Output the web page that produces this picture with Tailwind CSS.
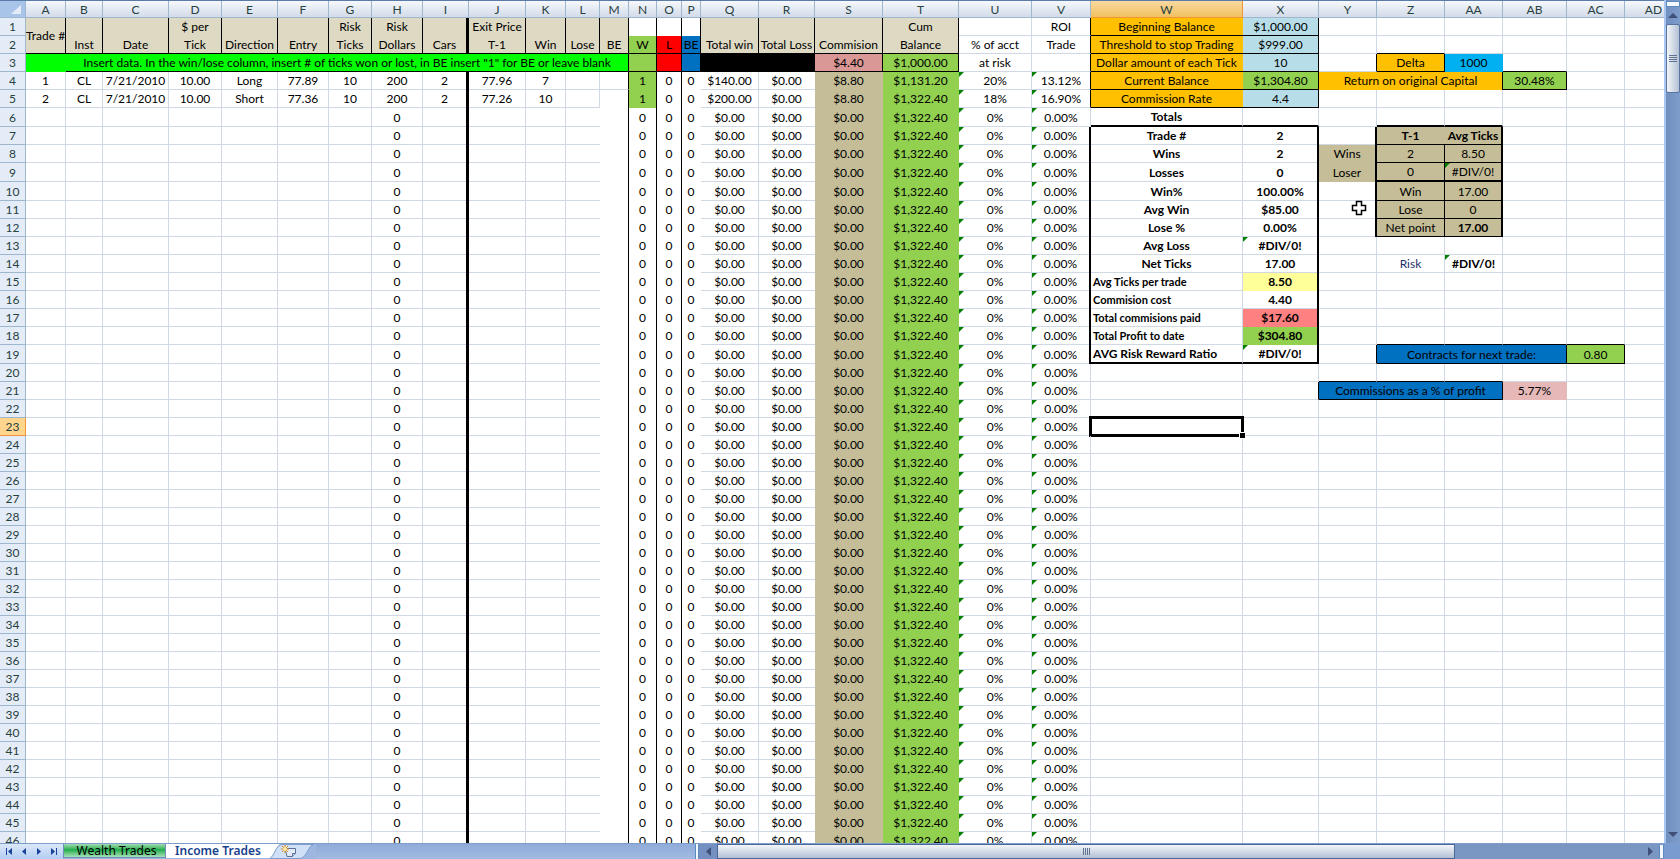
<!DOCTYPE html>
<html lang="en">

<head>
    <meta charset="UTF-8">
    <meta name="viewport" content="width=device-width, initial-scale=1.0">
    <title>Income Trades</title>
    <script src="https://cdn.jsdelivr.net/npm/@tailwindcss/browser@4"></script>
</head>

<body class="h-screen flex flex-col overflow-hidden bg-white text-black font-[Lato,Carlito,sans-serif] text-[12px] leading-[16px]">
    <div class="flex flex-1 min-h-0">
        <main class="flex-1 min-w-0 overflow-hidden border-t border-[#5b7ba8]">
            <table id="sheet" class="table-fixed border-separate border-spacing-0 w-[1683px]">
                <colgroup id="cols"></colgroup>
                <thead id="head"></thead>
                <tbody id="body"></tbody>
            </table>
        </main>
        <!-- vertical scrollbar -->
        <aside class="w-4 shrink-0 flex flex-col items-center border-l-2 border-[#a9c7f0] bg-linear-to-r from-[#6f8fbf] to-[#7f9dcb]">
            <div class="w-full h-[6px] bg-[#f3f8fd] border border-[#5b8ac0] mt-px"></div>
            <button aria-label="Scroll up" class="h-[17px] flex items-center"><svg width="10" height="5" viewBox="0 0 10 5"><path d="M0 5L5 0L10 5Z" fill="#3f4f77" /></svg></button>
            <div class="w-full h-[69px] rounded-xs border border-[#5a74a0] bg-linear-to-r from-[#f4f6f9] to-[#b3c0d4] flex flex-col items-center justify-center gap-px">
                <i class="w-2 h-px bg-[#5f7391]"></i><i class="w-2 h-px bg-[#5f7391]"></i><i class="w-2 h-px bg-[#5f7391]"></i><i class="w-2 h-px bg-[#5f7391]"></i>
            </div>
            <button aria-label="Scroll down" class="mt-auto mb-[6px]"><svg width="10" height="5" viewBox="0 0 10 5"><path d="M0 0H10L5 5Z" fill="#3f4f77" /></svg></button>
        </aside>
    </div>

    <!-- sheet tabs and horizontal scrollbar -->
    <footer class="h-4 shrink-0 flex bg-[#9db7e0] border-t border-[#7d9dcb]">
        <div class="w-[63px] px-[6px] flex items-center justify-between bg-linear-to-b from-[#dbe8f9] to-[#b3cdf2] text-[#17419a]">
            <button aria-label="First sheet"><svg width="7" height="7" viewBox="0 0 7 7" fill="currentColor"><path d="M0 0H1V7H0ZM6 0V7L2 3.500Z" /></svg></button>
            <button aria-label="Previous sheet"><svg width="7" height="7" viewBox="0 0 7 7" fill="currentColor"><path d="M5 0V7L1 3.500Z" /></svg></button>
            <button aria-label="Next sheet"><svg width="7" height="7" viewBox="0 0 7 7" fill="currentColor"><path d="M2 0V7L6 3.500Z" /></svg></button>
            <button aria-label="Last sheet"><svg width="7" height="7" viewBox="0 0 7 7" fill="currentColor"><path d="M6 0H7V7H6ZM1 0V7L5 3.500Z" /></svg></button>
        </div>
        <button class="w-[103px] h-[14px] pl-1 border-x border-b border-[#6d8fb8] bg-linear-to-b from-[#9fdcb4] via-[#12ad4c] via-45% to-[#a3e2b8] font-['Noto_Sans'] text-[12px] leading-[14px] whitespace-nowrap">Wealth Trades</button>
        <button class="w-[104px] h-[14px] bg-white font-['Noto_Sans'] font-semibold text-[12px] leading-[14px] text-[#15428b] whitespace-nowrap">Income Trades</button>
        <button aria-label="Insert worksheet" class="w-[46px]">
            <svg width="46" height="15" viewBox="0 0 46 15">
                <path d="M0 0H10Q7 2 5 8L0 15Z" fill="#fff" />
                <path d="M-1 14.500C5 13 5 1 12 .5H44C38 1 37 14 30 14.500Z" fill="#cfe0f7" stroke="#7d9dcb" />
                <path d="M15 4.500H25.500V9.500L22.500 12.500H17Z" fill="#e3ebf8" stroke="#5d7099" />
                <path d="M25.500 9.500H22.500V12.500" fill="#c5d3ea" stroke="#5d7099" />
                <path d="M15 1V9M11 5H19M12 2L18 8M18 2L12 8" stroke="#d9861c" />
                <circle cx="15" cy="5" r="2" fill="#ffe9a0" />
            </svg>
        </button>
        <div class="w-[379px] bg-linear-to-b from-[#8fabd8] to-[#a2bbe2]"></div>
        <div class="w-1 bg-[#f3f8fd] border-x border-[#5b8ac0]"></div>
        <div class="flex-1 flex items-center bg-[#7a97c3]">
            <button aria-label="Scroll left" class="w-[18px] h-full flex items-center justify-center bg-[#7390c0]"><svg width="5" height="9" viewBox="0 0 5 9"><path d="M5 0V9L0 4.500Z" fill="#3f4f77" /></svg></button>
            <div class="w-[76.5%] h-full border border-[#4a679b] bg-linear-to-b from-[#f4f6f9] to-[#b3c0d4] flex items-center justify-center gap-px">
                <i class="w-px h-[7px] bg-[#5f7391]"></i><i class="w-px h-[7px] bg-[#5f7391]"></i><i class="w-px h-[7px] bg-[#5f7391]"></i><i class="w-px h-[7px] bg-[#5f7391]"></i>
            </div>
            <button aria-label="Scroll right" class="ml-auto mr-[6px]"><svg width="5" height="9" viewBox="0 0 5 9"><path d="M0 0V9L5 4.500Z" fill="#3f4f77" /></svg></button>
            <div class="w-[5px] h-[13px] bg-[#f3f8fd] border-x border-[#5b8ac0]"></div>
        </div>
        <div class="w-4 bg-[#7a9bd0]"></div>
    </footer>

    <script>
        const cols = [
            ['A', 40], ['B', 37], ['C', 66], ['D', 53], ['E', 56], ['F', 51], ['G', 43], ['H', 51], ['I', 46], ['J', 57],
            ['K', 40], ['L', 34], ['M', 29], ['N', 28], ['O', 25], ['P', 19], ['Q', 58], ['R', 56], ['S', 68], ['T', 76],
            ['U', 73], ['V', 59], ['W', 152], ['X', 76], ['Y', 58], ['Z', 68], ['AA', 58], ['AB', 64], ['AC', 58], ['AD', 58]
        ];
        const names = cols.map(c => c[0]);
        const tallRows = [6, 9, 10, 19];
        const ROWS = 46;

        // fills
        const tan = 'bg-[#ddd9c3]', khaki = 'bg-[#c4bd97]', green = 'bg-[#92d050]', lime = 'bg-[#00ff00]';
        const gold = 'bg-[#ffc000]', sky = 'bg-[#b7dee8]', blue = 'bg-[#0070c0]', red = 'bg-[#ff0000]';
        // edges; cells with no bottom border get padding so text keeps one baseline
        const grid = 'border-r border-r-[#d0d7e5]', gridB = 'border-b border-b-[#d0d7e5] pb-0';
        const black = 'border-r border-r-black', under = 'border-b border-b-black pb-0';
        const none = 'border-r-0 pr-px', noneB = 'border-b-0 pb-px';
        const b2 = 'border-b-2 border-b-black pb-0';
        const r2 = 'relative pr-[2px] after:absolute after:top-0 after:-bottom-px after:right-0 after:w-[2px] after:bg-black';
        const r3 = 'relative pr-[3px] after:absolute after:top-0 after:-bottom-px after:right-0 after:w-[3px] after:bg-black';

        const cells = {};
        const cell = (ref) => cells[ref] || (cells[ref] = { text: '', bg: '', cls: '', right: grid, bottom: gridB });
        function range(from, to, r1, r2, fn) {
            for (let c = names.indexOf(from); c <= names.indexOf(to); c++)
                for (let r = r1; r <= r2; r++) fn(cell(names[c] + r));
        }
        const fill = (from, to, r1, r2, bg) => range(from, to, r1, r2, x => {
            x.bg = bg;
            x.right = none;
            x.bottom = noneB;
        });
        const right = (from, to, r1, r2, cls) => range(from, to, r1, r2, x => x.right = cls);
        const bottom = (from, to, r1, r2, cls) => range(from, to, r1, r2, x => x.bottom = cls);
        const text = (ref, t, cls) => { const x = cell(ref); x.text = t; if (cls) x.cls = cls; };

        range('A', 'AD', 1, ROWS, () => { });

        // trade log header
        fill('A', 'M', 1, 2, tan);
        fill('Q', 'T', 1, 2, tan);
        right('A', 'T', 1, 2, black);
        fill('M', 'P', 4, ROWS, 'bg-white');
        bottom('M', 'M', 4, 4, gridB);
        bottom('N', 'P', 1, 1, noneB);
        right('L', 'L', 6, ROWS, none);
        fill('N', 'N', 2, 5, green);
        fill('O', 'O', 2, 3, red);
        fill('P', 'P', 2, 3, blue);
        right('M', 'O', 1, ROWS, black);
        right('P', 'P', 1, 3, black);
        fill('A', 'B', 3, 3, lime);
        fill('Q', 'R', 3, 3, 'bg-black');
        fill('S', 'S', 3, 3, 'bg-[#d99795]');
        right('R', 'S', 3, 3, black);
        fill('S', 'S', 4, ROWS, khaki);
        right('R', 'R', 4, ROWS, none);
        fill('T', 'T', 3, ROWS, green);
        right('T', 'T', 3, 3, black);
        right('I', 'I', 1, ROWS, r3);
        bottom('A', 'T', 2, 2, under);
        bottom('B', 'T', 3, 3, under);

        cell('A1').rowspan = 2;
        text('A1', 'Trade #');
        cell('A1').bottom = under;
        ['B Inst', 'C Date', 'D Tick', 'E Direction', 'F Entry', 'G Ticks', 'H Dollars', 'I Cars', 'J T-1', 'K Win', 'L Lose', 'M BE',
            'N W', 'O L', 'P BE', 'Q Total win', 'R Total Loss', 'S Commision', 'T Balance', 'U % of acct', 'V Trade'
        ].forEach(s => text(s.split(' ')[0] + 2, s.slice(2)));
        text('D1', '$ per'); text('G1', 'Risk'); text('H1', 'Risk'); text('J1', 'Exit Price'); text('T1', 'Cum'); text('V1', 'ROI');
        text('B3', 'Insert data. In the win/lose column, insert # of ticks won or lost, in BE insert "1" for BE or leave blank');
        cell('B3').colspan = 12;
        cell('B3').right = black;
        text('S3', '$4.40'); text('T3', '$1,000.00'); text('U3', 'at risk');

        const trades = {
            4: ['1', 'CL', '7/21/2010', '10.00', 'Long', '77.89', '10', '200', '2', '77.96', '7', '', '', '1', '0', '0', '$140.00', '$0.00', '$8.80', '$1,131.20', '20%', '13.12%'],
            5: ['2', 'CL', '7/21/2010', '10.00', 'Short', '77.36', '10', '200', '2', '77.26', '10', '', '', '1', '0', '0', '$200.00', '$0.00', '$8.80', '$1,322.40', '18%', '16.90%']
        };
        const blank = ['', '', '', '', '', '', '', '0', '', '', '', '', '', '0', '0', '0', '$0.00', '$0.00', '$0.00', '$1,322.40', '0%', '0.00%'];
        for (let r = 4; r <= ROWS; r++) {
            (trades[r] || blank).forEach((t, i) => text(names[i] + r, t));
            cell('U' + r).flag = cell('V' + r).flag = true;
        }

        // account settings
        fill('W', 'W', 1, 5, gold);
        fill('X', 'X', 1, 5, sky);
        cell('X4').bg = green;
        bottom('W', 'X', 1, 5, under);
        right('V', 'V', 1, 5, black);
        right('X', 'X', 1, 5, black);
        [['Beginning Balance', '$1,000.00'], ['Threshold to stop Trading', '$999.00'], ['Dollar amount of each Tick', '10'],
        ['Current Balance', '$1,304.80'], ['Commission Rate', '4.4']].forEach(([k, v], i) => { text('W' + (i + 1), k); text('X' + (i + 1), v); });

        // totals
        fill('X', 'X', 15, 15, 'bg-[#ffff99]');
        fill('X', 'X', 17, 17, 'bg-[#ff8080]');
        fill('X', 'X', 18, 18, green);
        right('V', 'V', 7, 19, r2);
        right('X', 'X', 7, 19, r2);
        bottom('W', 'X', 6, 6, b2);
        bottom('W', 'X', 19, 19, b2);
        text('W6', 'Totals', 'font-bold');
        [['Trade #', '2'], ['Wins', '2'], ['Losses', '0'], ['Win%', '100.00%'], ['Avg Win', '$85.00'], ['Lose %', '0.00%'], ['Avg Loss', '#DIV/0!'],
        ['Net Ticks', '17.00'], ['Avg Ticks per trade', '8.50'], ['Commision cost', '4.40'], ['Total commisions paid', '$17.60'],
        ['Total Profit to date', '$304.80'], ['AVG Risk Reward Ratio', '#DIV/0!']].forEach(([k, v], i) => {
            const r = i + 7;
            text('W' + r, k, r < 15 ? 'font-bold' : r < 19 ? 'font-bold text-left pl-[2px] text-[11px]' : 'font-bold text-left pl-[2px]');
            text('X' + r, v, 'font-bold');
        });
        cell('X13').flag = cell('X19').flag = true;
        cell('W23').selected = true;

        // side boxes
        fill('Z', 'Z', 3, 3, gold);
        fill('AA', 'AA', 3, 3, 'bg-[#00b0f0]');
        fill('Y', 'Y', 4, 4, gold);
        fill('AB', 'AB', 4, 4, green);
        cell('Y3').right = cell('Z3').right = cell('Y4').right = cell('AB4').right = black;
        cell('Z2').bottom = cell('Z3').bottom = cell('AB3').bottom = cell('AB4').bottom = under;
        cell('Y4').colspan = 3;
        text('Z3', 'Delta'); text('AA3', '1000'); text('Y4', 'Return on original Capital'); text('AB4', '30.48%');

        fill('Y', 'Y', 8, 9, khaki);
        fill('Z', 'AA', 7, 12, khaki);
        right('Y', 'Y', 7, 12, r2);
        right('AA', 'AA', 7, 12, r2);
        right('Z', 'Z', 8, 12, black);
        bottom('Z', 'AA', 6, 6, b2);
        bottom('Z', 'AA', 7, 12, under);
        bottom('Z', 'AA', 9, 9, b2);
        text('Y8', 'Wins'); text('Y9', 'Loser');
        text('Z7', 'T-1', 'font-bold'); text('AA7', 'Avg Ticks', 'font-bold');
        text('Z8', '2'); text('AA8', '8.50'); text('Z9', '0'); text('AA9', '#DIV/0!');
        text('Z10', 'Win'); text('AA10', '17.00'); text('Z11', 'Lose'); text('AA11', '0');
        text('Z12', 'Net point'); text('AA12', '17.00', 'font-bold');
        text('Z14', 'Risk', 'text-[#1f2f6b]'); text('AA14', '#DIV/0!', 'font-bold');
        cell('AA9').flag = cell('AA14').flag = true;

        fill('Z', 'Z', 19, 19, blue);
        fill('AC', 'AC', 19, 19, green);
        bottom('Z', 'AC', 18, 19, under);
        cell('Y19').right = cell('Z19').right = cell('AC19').right = black;
        cell('Z19').colspan = 3;
        text('Z19', 'Contracts for next trade:'); text('AC19', '0.80');
        fill('Y', 'Y', 21, 21, blue);
        fill('AB', 'AB', 21, 21, 'bg-[#e6b8b7]');
        bottom('Y', 'AA', 20, 21, under);
        cell('X21').right = cell('Y21').right = black;
        cell('Y21').colspan = 3;
        text('Y21', 'Commissions as a % of profit'); text('AB21', '5.77%');

        // render
        document.getElementById('cols').innerHTML = '<col style="width:26px">' + cols.map(c => `<col style="width:${c[1]}px">`).join('');
        document.getElementById('head').innerHTML = '<tr class="h-[17px]">' +
            '<th class="p-0 bg-[#a9c4e9] border-r border-b border-[#9eb6ce]"><svg class="ml-auto mr-1" width="10" height="10" viewBox="0 0 10 10"><path d="M10 1V10H0Z" fill="#e4ecf7" /></svg></th>' +
            names.map(n => `<th scope="col" class="px-0 pt-px pb-0 h-[17px] leading-[14px] font-normal text-[#27413e] border-r border-b ${n === 'W' ? 'bg-linear-to-b from-[#f9d99f] to-[#f1c15f] border-[#f29536]' : 'bg-linear-to-b from-[#f6f9fc] to-[#d3dbe9] border-[#9eb6ce]'}">${n}</th>`).join('') + '</tr>';

        let html = '';
        const skip = { A2: true };
        for (let r = 1; r <= ROWS; r++) {
            const h = tallRows.includes(r) ? 'h-[19px]' : 'h-[18px]';
            html += `<tr class="${h}"><th scope="row" class="p-0 ${h} align-bottom font-normal text-[#27413e] border-r border-b ${r === 23 ? 'bg-[#ffd58d] border-[#f29536]' : 'bg-[#e4ecf7] border-[#9eb6ce]'}">${r}</th>`;
            for (let c = 0; c < names.length; c++) {
                const ref = names[c] + r;
                if (skip[ref]) continue;
                const x = cells[ref];
                const span = (x.colspan ? ` colspan="${x.colspan}"` : '') + (x.rowspan ? ` rowspan="${x.rowspan}"` : '');
                const pos = x.flag || x.selected ? 'relative ' : '';
                const align = (x.cls.includes('text-left') ? '' : 'text-center ') + (x.rowspan ? 'align-middle ' : 'align-bottom ');
                html += `<td${span} class="px-0 pt-0 ${pos}${align}whitespace-nowrap ${x.right} ${x.bottom} ${x.bg} ${x.cls}">`;
                if (x.flag) html += '<i class="absolute top-0 left-0 border-t-[5px] border-r-[5px] border-t-[#007f00] border-r-transparent"></i>';
                if (x.selected) html += '<i class="absolute -inset-[2px] border-3 border-black"></i><i class="absolute -right-[3px] -bottom-[3px] size-[5px] bg-black outline outline-white"></i>';
                html += x.text + '</td>';
                if (x.colspan) c += x.colspan - 1;
            }
            html += '</tr>';
        }
        document.getElementById('body').innerHTML = html;
    </script>

    <!-- mouse pointer -->
    <svg class="absolute left-[1351px] top-[200px]" width="17" height="17" viewBox="0 0 17 17">
        <path d="M5.500 1.500H10.500V5.500H14.500V10.500H10.500V14.500H5.500V10.500H1.500V5.500H5.500Z" fill="#fff" stroke="#000" stroke-width="1.500" />
    </svg>
</body>

</html>
